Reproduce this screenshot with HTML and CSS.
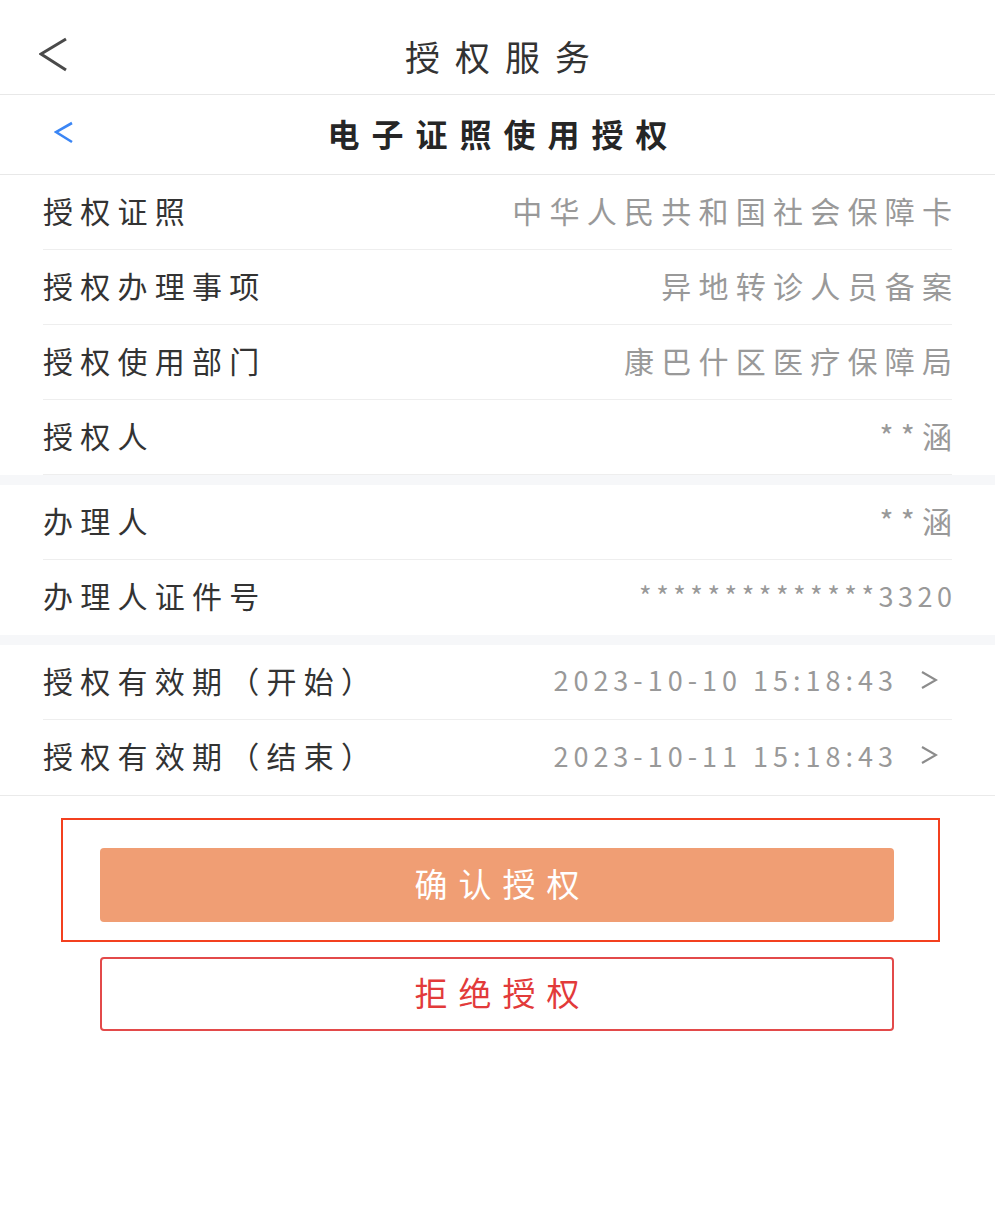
FILE: index.html
```html
<!DOCTYPE html>
<html lang="zh-CN">
<head>
<meta charset="utf-8"/>
<meta content="width=device-width, initial-scale=1.0" name="viewport"/>
<title>授权服务</title>
<link rel="stylesheet" href="styles.css">
</head>
<body>
<header class="top-bar">
  <a class="back" href="#">
    <svg width="30" height="36" viewBox="0 0 30 36"><polyline points="27,2 2,17 27,33" fill="none" stroke="#4a4a4a" stroke-width="3"/></svg>
  </a>
  <h1>授权服务</h1>
  <span></span>
</header>
<div class="sub-bar">
  <a class="back" href="#">
    <svg width="20" height="24" viewBox="0 0 20 24"><polyline points="18,2 2,11 18,21" fill="none" stroke="#3b86f5" stroke-width="2.6"/></svg>
  </a>
  <h2>电子证照使用授权</h2>
  <span></span>
</div>

<main>
  <section class="group">
    <div class="row"><span class="label">授权证照</span><span class="value">中华人民共和国社会保障卡</span></div>
    <div class="row"><span class="label">授权办理事项</span><span class="value">异地转诊人员备案</span></div>
    <div class="row"><span class="label">授权使用部门</span><span class="value">康巴什区医疗保障局</span></div>
    <div class="row"><span class="label">授权人</span><span class="value">**涵</span></div>
  </section>

  <section class="group">
    <div class="row"><span class="label">办理人</span><span class="value">**涵</span></div>
    <div class="row last"><span class="label">办理人证件号</span><span class="value id-no">**************3320</span></div>
  </section>

  <section class="group dates">
    <div class="row">
      <span class="label">授权有效期（开始）</span>
      <span class="value num">2023-10-10 15:18:43</span>
      <svg class="arrow" width="18" height="22" viewBox="0 0 18 22"><polyline points="2,3 16,11 2,19" fill="none" stroke="#8c8c8c" stroke-width="2.2"/></svg>
    </div>
    <div class="row last">
      <span class="label">授权有效期（结束）</span>
      <span class="value num">2023-10-11 15:18:43</span>
      <svg class="arrow" width="18" height="22" viewBox="0 0 18 22"><polyline points="2,3 16,11 2,19" fill="none" stroke="#8c8c8c" stroke-width="2.2"/></svg>
    </div>
  </section>

  <div class="actions">
    <div class="highlight">
      <button class="btn btn-confirm">确认授权</button>
    </div>
    <button class="btn btn-reject">拒绝授权</button>
  </div>
</main>
</body>
</html>
```

FILE: styles.css
```css
* {
  box-sizing: border-box;
}

body {
  margin: 0;
  padding: 0;
  background: #fff;
  color: #333;
  font-family: "Noto Sans CJK SC", "Noto Sans", sans-serif;
}

a {
  text-decoration: none;
}

.top-bar,
.sub-bar {
  display: grid;
  grid-template-columns: 1fr auto 1fr;
  align-items: center;
  border-bottom: 1px solid #e8e8e8;
}

.top-bar {
  height: 95px;
  padding-top: 16px;
}

.top-bar .back {
  display: flex;
  padding-left: 39px;
}

.top-bar h1 {
  margin: 0;
  font-size: 35px;
  font-weight: 400;
  letter-spacing: 15px;
  padding-left: 15px;
  color: #333;
}

.sub-bar {
  height: 80px;
  padding-bottom: 4px;
}

.sub-bar .back {
  display: flex;
  padding-left: 54px;
}

.sub-bar h2 {
  margin: 0;
  font-size: 32px;
  font-weight: 700;
  letter-spacing: 12px;
  padding-left: 12px;
  color: #262626;
}

.group {
  border-bottom: 10px solid #f6f7f9;
}

.group.dates {
  border-bottom: 1px solid #eaeaea;
}

.row {
  display: flex;
  align-items: center;
  height: 75px;
  margin: 0 43px;
  padding-bottom: 5px;
  border-bottom: 1px solid #eeeeee;
}

.row.last {
  border-bottom: none;
}

.label {
  font-size: 30px;
  letter-spacing: 7.25px;
  color: #333;
  white-space: nowrap;
}

.value {
  margin-left: auto;
  margin-right: -7.25px;
  font-size: 30px;
  letter-spacing: 7.25px;
  color: #999;
  white-space: nowrap;
}

.value.id-no {
  font-size: 27px;
  letter-spacing: 4.5px;
  margin-right: -4.5px;
}

.value.num {
  font-size: 27px;
  letter-spacing: 5px;
  margin-right: 22px;
}

.arrow {
  margin-right: 14px;
}

.actions {
  padding-top: 22px;
}

.highlight {
  width: 879px;
  margin-left: 61px;
  padding: 28px 0 18px 37px;
  border: 2px solid #f3401f;
}

.btn {
  display: block;
  width: 794px;
  height: 74px;
  border-radius: 4px;
  font-family: inherit;
  font-size: 33px;
  letter-spacing: 11px;
  padding: 0 0 5px 11px;
  cursor: pointer;
}

.btn-confirm {
  background: #f09e74;
  color: #fff;
  border: none;
}

.btn-reject {
  margin: 15px 0 0 100px;
  background: #fff;
  color: #e23a3a;
  border: 2px solid #e34a4a;
}
```
